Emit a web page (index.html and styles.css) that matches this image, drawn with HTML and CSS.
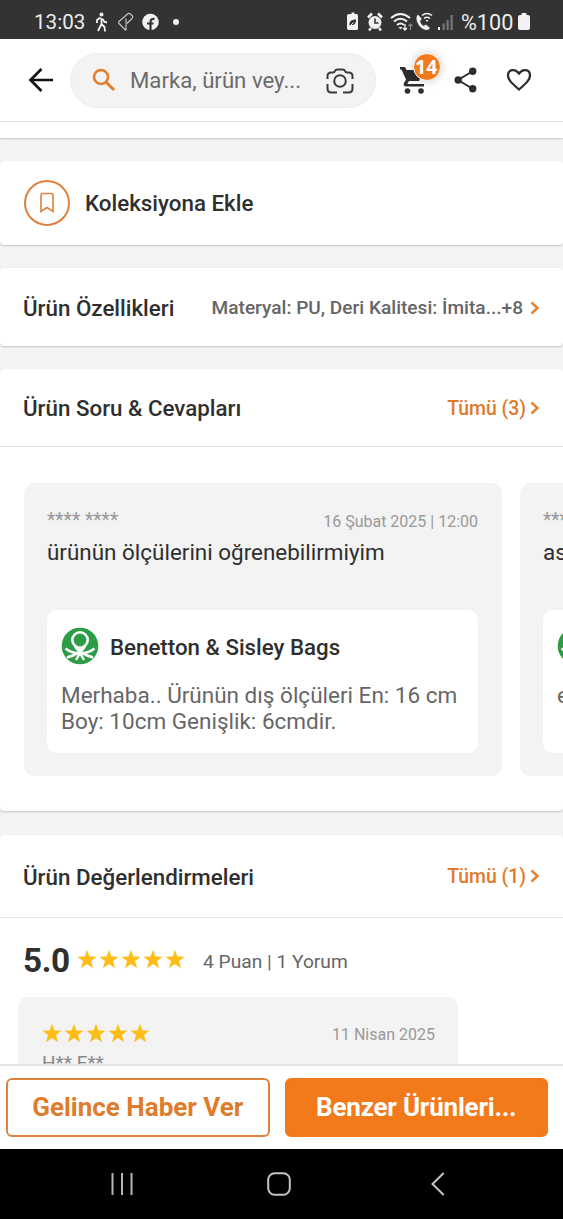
FILE: index.html
```html
<!DOCTYPE html>
<html lang="tr">
<head>
<meta charset="utf-8">
<title>Ürün Detayı</title>
<link rel="stylesheet" href="styles.css">
</head>
<body>
<svg class="defs" aria-hidden="true">
  <symbol id="chevron" viewBox="0 0 10 14"><path d="M1.500 1.500 7.500 7l-6 5.500" fill="none" stroke="currentColor" stroke-width="2.400"/></symbol>
  <symbol id="star" viewBox="0 0 24 24"><path d="M12 1l2.900 7.900 8.600.3-6.700 5.300 2.400 8.500-7.200-4.900-7.200 4.900 2.400-8.500L.5 9.200l8.600-.3z" fill="#fdbc16"/></symbol>
  <symbol id="brand" viewBox="0 0 38 38">
    <circle cx="19" cy="19" r="18.300" fill="#2c9c46"/>
    <g fill="none" stroke="#fff" stroke-width="2.600">
      <circle cx="19" cy="13" r="7.700"/>
      <path d="M14 19c2 4 9 9 18 11.500M24 19c-2 4-9 9-18 11.500" stroke-width="2.800"/>
      <path d="M4.500 21.500C8 24.500 13 26 19 26.500c6-.5 11-2 14.500-5" stroke-width="2.400"/>
      <path d="M15 33l4-7 4 7" stroke-width="2.400"/>
    </g>
  </symbol>
</svg>
<div class="screen">
  <div class="statusbar">
    <span class="clock">13:03</span>
    <svg class="status-left" width="86" height="22" viewBox="0 0 86 22" fill="#f2f2f2">
      <circle cx="7.500" cy="3.500" r="2"/>
      <path d="M6.500 6.500 3 9v3M7.500 7v6l-3.500 7M7.500 13l3 3 .5 4.500M8.500 8l2 3 2.500.5" fill="none" stroke="#f2f2f2" stroke-width="1.800"/>
      <path d="M32 19.500 25 12.500q-1-1 0-2L33.500 3q1.500-1.200 3 0l1.500 1.500q1.500 1.500 0 3L33 12.500M32 19.500V7.500" fill="none" stroke="#c8c8c8" stroke-width="1.100"/>
      <circle cx="56.500" cy="11" r="8.300"/>
      <path d="M56.500 20v-9q0-3.500 4-3.200M53 12.500h6.500" fill="none" stroke="#333" stroke-width="2.200"/>
      <circle cx="82" cy="11" r="3"/>
    </svg>
    <svg class="status-right" width="110" height="22" viewBox="0 0 110 22" fill="#f2f2f2">
      <path d="M3.500 3h2V1.500h3V3h2q1.500 0 1.500 1.500v13q0 1.500-1.500 1.500h-7Q1 19 1 17.500v-13Q1 3 3.500 3z"/>
      <path d="M3.500 14.500c-.5-4 2-6 6.500-6 .3 4-2 6-5 5.500z" fill="#333"/>
      <path d="M4 15l3.500-3.500" stroke="#f2f2f2"/>
      <circle cx="29" cy="11.500" r="6.500"/>
      <path d="M22 6.500l4-4M32 2.500l4 4M25 17l-2 2.500M33 17l2 2.500" stroke="#f2f2f2" stroke-width="2.500"/>
      <path d="M29 7.500v4.500h3.500" stroke="#333" stroke-width="1.600" fill="none"/>
      <path d="M45 7q9.500-8 19 0M48 10.500q6.500-5.500 13 0M51 14q3.500-3 7 0" stroke="#f2f2f2" stroke-width="2" fill="none"/>
      <path d="M52.500 16h4l-2 2.500z"/>
      <path d="M59 13v6m-2-2 2 2 2-2" stroke="#f2f2f2" stroke-width="1.300" fill="none"/>
      <path d="M64.500 19v-6m-2 2 2-2 2 2" stroke="#888" stroke-width="1.200" fill="none"/>
      <path d="M72 3.500q-2.500 2-1 7 2.500 7 9 8.500 2.500.5 4-2l-4-3.500-2.500 1.500q-3-2-3.500-5l1.800-2z"/>
      <path d="M76 4.500q5-4 10 0M78 7.500q3-2.500 6 0" stroke="#f2f2f2" stroke-width="1.600" fill="none"/>
      <path d="M79.500 9h3L81 11z"/>
      <path d="M92 16h2v3h-2z"/>
      <path d="M96.500 12.500h2.200V19h-2.200zM100.500 9h2.200v10h-2.200zM104.500 4h2.200v15h-2.200z" fill="#777"/>
    </svg>
    <span class="percent">%100</span>
    <svg class="battery" width="12" height="18" viewBox="0 0 12 18" fill="#f2f2f2"><path d="M3.500 2V1q0-1 1-1h3q1 0 1 1v1H10q2 0 2 2v11q0 2-2 2H2q-2 0-2-2V4q0-2 2-2z"/></svg>
  </div>

  <div class="header">
    <svg class="back" width="26" height="26" viewBox="0 0 26 26" fill="none" stroke="#111" stroke-width="2.700"><path d="M25 13H3M13.500 2 2.500 13l11 11"/></svg>
    <div class="search">
      <svg class="lens" width="24" height="24" viewBox="0 0 24 24" fill="none" stroke="#e67e2c" stroke-width="2.600"><circle cx="9" cy="9" r="7"/><path d="M14 14l8 8" stroke-width="3"/></svg>
      <span class="query">Marka, ürün vey...</span>
      <svg class="camera" width="28" height="26" viewBox="0 0 28 26" fill="none" stroke="#3b3b3b" stroke-width="2"><path d="M1.500 11V8q0-3.500 4-3.500h1.500Q8.500 4.500 9 3q.5-1.500 2.500-1.500h5Q18.500 1.500 19 3q.5 1.500 2 1.500h1.500q4 0 4 3.500v3M1.500 16v4.500q0 4 4 4H11M26.500 16v4.500q0 4-4 4H17"/><circle cx="14" cy="13" r="5.800"/></svg>
    </div>
    <div class="cart">
      <svg width="28" height="30" viewBox="0 0 28 30" fill="#2d2d2d"><path d="M0 2h5l1.500 3H24l-5 11H9l-1.700 3H24v2.500H6q-3.500-.5-2-3.500l2-3.500L1.500 4.500H0z"/><circle cx="7.500" cy="26" r="2.800"/><circle cx="21" cy="26" r="2.800"/></svg>
      <span class="badge">14</span>
    </div>
    <svg class="share" width="24" height="26" viewBox="0 0 24 26" fill="#2d2d2d"><path d="M19 4 4 13l15 9" fill="none" stroke="#2d2d2d" stroke-width="2"/><circle cx="18.700" cy="4.200" r="3.700"/><circle cx="4.200" cy="13" r="3.700"/><circle cx="18.700" cy="21.800" r="3.700"/></svg>
    <svg class="heart" width="26" height="24" viewBox="0 0 26 24" fill="none" stroke="#2d2d2d" stroke-width="2.300"><path d="M13 21.500C5 14.500 2 11.500 2 7.500 2 1.500 9 0 13 5.500 17 0 24 1.500 24 7.500c0 4-3 7-11 14z"/></svg>
  </div>

  <div class="content">
    <div class="card sliver"></div>
    <div class="card collection">
      <span class="ring"><svg width="16" height="22" viewBox="0 0 16 22" fill="none" stroke="#dd813c" stroke-width="1.600"><path d="M2 19.500V3.500q0-2 2-2h8q2 0 2 2v16l-6-4z"/></svg></span>
      <span class="title">Koleksiyona Ekle</span>
    </div>
    <div class="card features">
      <span class="title">Ürün Özellikleri</span>
      <span class="summary">Materyal: PU, Deri Kalitesi: İmita...+8</span>
      <svg class="chev"><use href="#chevron"/></svg>
    </div>
    <div class="card questions">
      <div class="section-head">
        <span class="title">Ürün Soru &amp; Cevapları</span>
        <span class="all">Tümü (3)</span><svg class="chev"><use href="#chevron"/></svg>
      </div>
      <div class="carousel">
        <div class="question">
          <div class="meta"><span class="user">**** ****</span><span class="date">16 Şubat 2025 | 12:00</span></div>
          <p class="ask">ürünün ölçülerini oğrenebilirmiyim</p>
          <div class="answer">
            <div class="seller"><svg class="logo"><use href="#brand"/></svg><span class="name">Benetton &amp; Sisley Bags</span></div>
            <p class="reply">Merhaba.. Ürünün dış ölçüleri En: 16 cm<br>Boy: 10cm Genişlik: 6cmdir.</p>
          </div>
        </div>
        <div class="question">
          <div class="meta"><span class="user">**** ****</span></div>
          <p class="ask">as</p>
          <div class="answer">
            <div class="seller"><svg class="logo"><use href="#brand"/></svg></div>
            <p class="reply">e</p>
          </div>
        </div>
      </div>
    </div>
    <div class="card reviews">
      <div class="section-head">
        <span class="title">Ürün Değerlendirmeleri</span>
        <span class="all">Tümü (1)</span><svg class="chev"><use href="#chevron"/></svg>
      </div>
      <div class="rating">
        <span class="score">5.0</span>
        <span class="stars"><svg><use href="#star"/></svg><svg><use href="#star"/></svg><svg><use href="#star"/></svg><svg><use href="#star"/></svg><svg><use href="#star"/></svg></span>
        <span class="counts">4 Puan | 1 Yorum</span>
      </div>
      <div class="review">
        <div class="review-top">
          <span class="stars"><svg><use href="#star"/></svg><svg><use href="#star"/></svg><svg><use href="#star"/></svg><svg><use href="#star"/></svg><svg><use href="#star"/></svg></span>
          <span class="date">11 Nisan 2025</span>
        </div>
        <div class="reviewer">H** E**</div>
      </div>
    </div>
  </div>

  <div class="actions">
    <div class="btn outline">Gelince Haber Ver</div>
    <div class="btn solid">Benzer Ürünleri...</div>
  </div>

  <div class="navbar">
    <svg width="24" height="24" viewBox="0 0 24 24" stroke="#b5b5b5" stroke-width="2"><path d="M2.500 1v22M12 1v22M21.500 1v22"/></svg>
    <svg width="24" height="24" viewBox="0 0 24 24" fill="none" stroke="#c4c4c4" stroke-width="2"><rect x="1.200" y="1.200" width="21.600" height="21.600" rx="6.500"/></svg>
    <svg width="14" height="24" viewBox="0 0 14 24" fill="none" stroke="#c4c4c4" stroke-width="2"><path d="M12.700 1 1.500 12l11.200 11"/></svg>
  </div>
</div>
</body>
</html>
```
FILE: styles.css
```css
* { box-sizing: border-box; }
body { margin: 0; font-family: Roboto, sans-serif; color: #2f2f2f; }
p { margin: 0; }
svg { display: block; flex: none; }
span { white-space: nowrap; }
.defs { position: absolute; width: 0; height: 0; }
.screen { width: 563px; height: 1219px; display: flex; flex-direction: column; overflow: hidden; background: #f3f3f3; }

.statusbar { height: 39px; flex: none; background: #333; color: #ededed; display: flex; align-items: center; padding: 5px 33px 0 34px; font-size: 21.7px; }
.clock { width: 61px; font-size: 20.6px; }
.status-right { margin-left: 166px; }
.percent { margin-left: 5px; width: 55px; }
.battery { margin-left: 3px; }

.header { height: 83px; flex: none; background: #fff; display: flex; align-items: center; padding: 0 0 1px 28px; border-bottom: 1px solid #e4e4e4; }
.search { width: 306px; height: 55px; margin: 1px 0 0 16px; border-radius: 28px; background: #f3f3f3; border: 1px solid #ededed; display: flex; align-items: center; padding: 0 21px; }
.query { font-size: 22.2px; color: #6b6b6b; margin: 0 0 0 14px; width: 171px; }
.camera { margin: 1px 0 0 25px; }
.cart { position: relative; margin-left: 24px; }
.badge { position: absolute; left: 13px; top: -12px; width: 28px; height: 28px; border-radius: 50%; background: #f27a1a; border: 1px solid #fff; box-shadow: 0 0 10px #0003; color: #fff; font-family: "Noto Sans", sans-serif; font-size: 19.5px; font-weight: 700; line-height: 26px; text-indent: 1px; }
.share { margin-left: 26px; }
.heart { margin-left: 28px; }

.content { height: 942px; flex: none; overflow: hidden; display: flex; flex-direction: column; gap: 23px; }
.card { background: #fff; flex: none; box-shadow: 0 1px 2px #0003; border-radius: 4px; }
.sliver { height: 16px; border-radius: 0; }
.title { font-size: 22.35px; font-weight: 500; }
.collection { height: 84px; display: flex; align-items: center; padding-left: 24px; gap: 15px; }
.ring { width: 46px; height: 46px; border: 2px solid #dd813c; border-radius: 50%; display: grid; place-items: center; }
.features { height: 78px; display: flex; align-items: center; padding: 1px 23px 0; }
.summary { margin-left: auto; font-size: 19.1px; font-weight: 500; color: #666; }
.chev { width: 10px; height: 14px; margin-left: 7px; color: #e67e2c; }
.questions { height: 442px; }
.section-head { height: 78px; display: flex; align-items: center; padding: 1px 23px 0; border-bottom: 1px solid #e2e2e2; }
.all { margin: 0 0 0 auto; font-size: 19.4px; font-weight: 500; color: #df7a2a; }
.section-head .chev { margin: -1px 0 0 4px; }
.carousel { display: flex; gap: 18px; padding: 36px 0 0 24px; overflow: hidden; }
.question { width: 478px; height: 293px; flex: none; background: #f3f3f3; border-radius: 10px; padding: 26px 24px 0 23px; }
.meta { display: flex; justify-content: space-between; height: 28px; }
.user { font-size: 19.3px; line-height: 23px; color: #999; }
.date { font-size: 16px; line-height: 26px; color: #999; }
.ask { font-size: 22.45px; line-height: 30px; }
.answer { height: 143px; margin-top: 43px; background: #fff; border-radius: 10px; padding: 17px 14px 0; }
.seller { display: flex; align-items: center; gap: 11px; }
.logo { width: 38px; height: 38px; }
.name { font-size: 22.3px; font-weight: 500; padding-top: 2px; }
.reply { margin-top: 17px; font-size: 22.5px; line-height: 26px; color: #666; white-space: nowrap; }
.reviews { height: 400px; margin-top: 1px; }
.reviews .section-head { height: 83px; }
.rating { height: 79px; display: flex; align-items: center; padding: 5px 0 0 23px; }
.score { font-size: 33.3px; font-weight: 700; width: 54px; letter-spacing: -.4px; padding-top: 1px; }
.stars { display: flex; gap: 2px; }
.stars svg { width: 20px; height: 20px; }
.rating .stars { margin-top: -2px; }
.counts { margin: 2px 0 0 18px; font-size: 19.2px; color: #666; }
.review { margin-left: 18px; width: 440px; height: 200px; background: #f3f3f3; border-radius: 10px; padding: 26px 23px 0 24px; }
.review-top { display: flex; justify-content: space-between; height: 20px; align-items: center; }
.review-top .date { padding-top: 3px; }
.reviewer { font-size: 19px; line-height: 24px; margin-top: 8px; color: #888; }

.actions { height: 85px; flex: none; background: #fff; border-top: 2px solid #e5e5e5; display: flex; padding: 12px 15px 0 6px; gap: 15px; }
.btn { height: 59px; flex: 1 1 0; min-width: 0; border: 2px solid #f27a1a; border-radius: 6px; font-size: 26px; font-weight: 700; display: flex; align-items: center; justify-content: center; white-space: nowrap; padding-bottom: 1px; }
.outline { border-color: #df8240; color: #df7c2c; }
.solid { background: #f27a1a; color: #fff; letter-spacing: -.2px; }
.navbar { height: 70px; flex: none; background: #000; display: flex; align-items: center; padding-left: 110px; }
.navbar svg + svg { margin-left: 133px; }
.navbar svg:last-child { margin-left: 140px; }
```
